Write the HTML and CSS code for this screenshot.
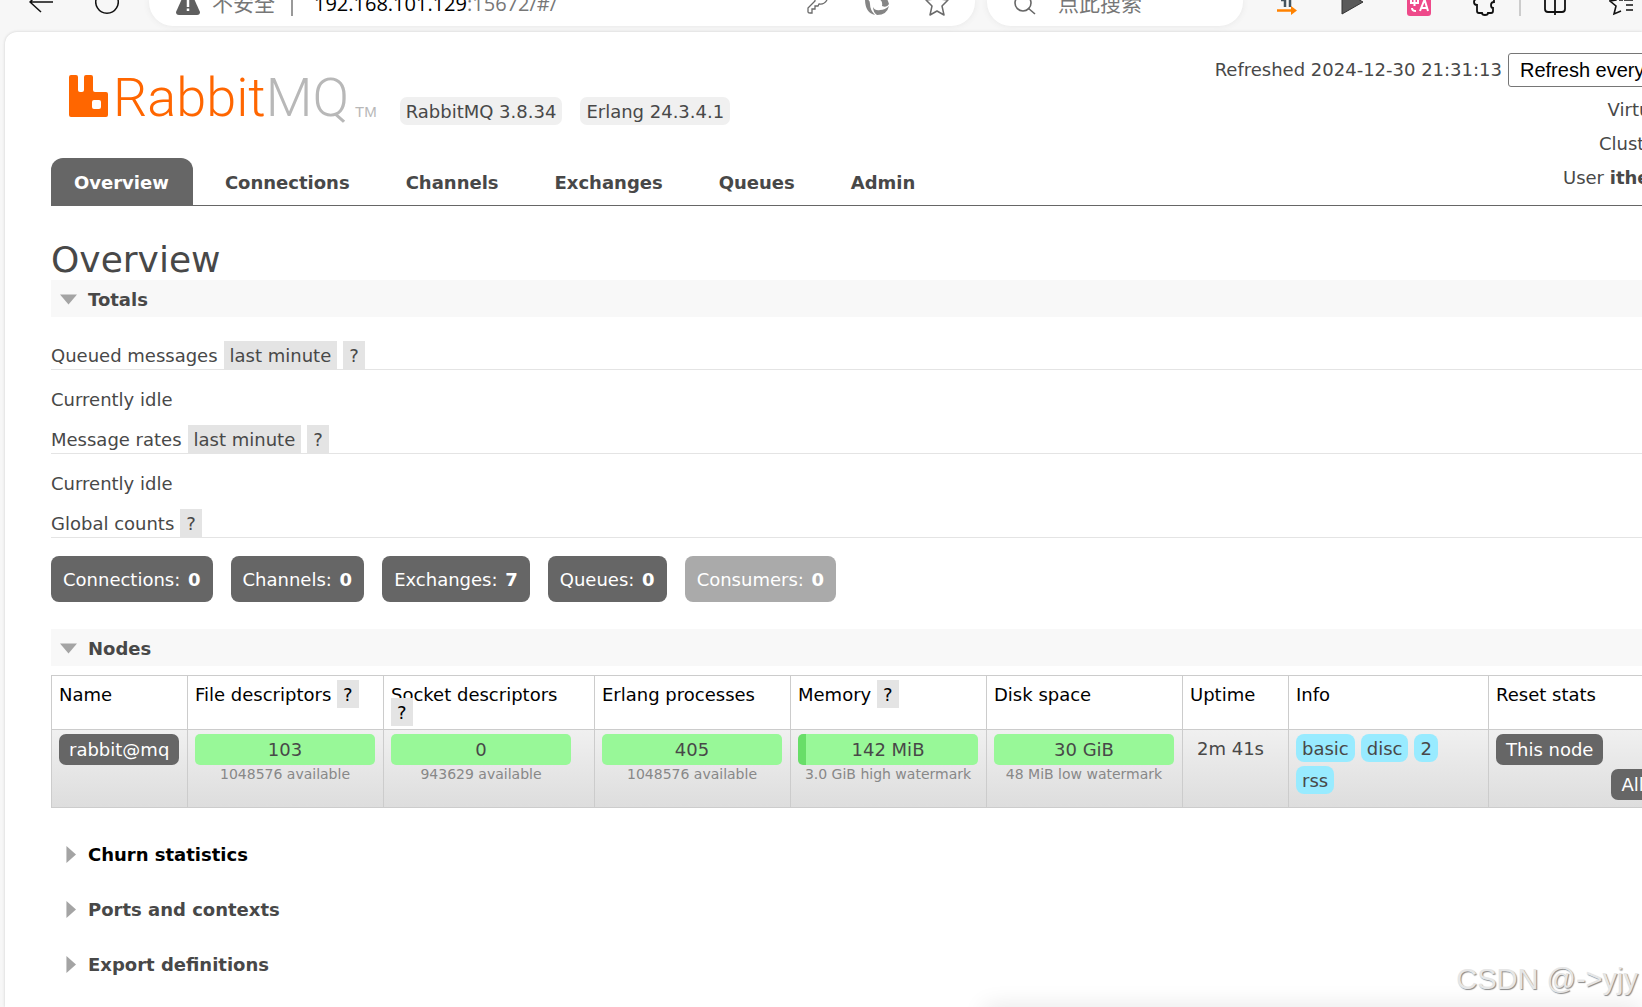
FILE: index.html
```html
<!DOCTYPE html>
<html lang="en">
<head>
<meta charset="utf-8">
<title>RabbitMQ Management</title>
<link rel="stylesheet" href="styles.css">
</head>
<body>
<header class="toolbar">
  <div class="toolbar-nav">
    <button class="icon-button" aria-label="Back"><svg width="24" height="16" viewBox="0 0 24 16"><path d="M24 2H1M12-9L1 2l11 10" fill="none" stroke="#111" stroke-width="1.5"/></svg></button>
    <button class="icon-button" aria-label="Reload"><svg width="24" height="16" viewBox="0 0 24 16"><path d="M2-3a11.200 11.200 0 1 0 20 0" fill="none" stroke="#111" stroke-width="1.500"/></svg></button>
  </div>
  <div class="address">
    <svg width="24" height="16" viewBox="0 0 24 16"><path d="M12-10q2 0 3 2l9 20q0 3-3 3H3q-3 0-3-3L9-8q1-2 3-2z" fill="#5f5f5f"/><path d="M12-4v11M12 8.500v2.500" stroke="#fff" stroke-width="2.500"/></svg>
    <span class="muted">不安全</span>
    <span class="divider dark"></span>
    <span class="url">192.168.101.129<span class="muted">:15672/#/</span></span>
    <span class="address-icons">
      <svg width="24" height="16" viewBox="0 0 24 16"><path d="M9-3l0 4-7 7v4q0 1 2 1h2V9h3V6h3l1-2q5 1 8-4" fill="none" stroke="#6a6a6a" stroke-width="1.300"/></svg>
      <svg width="26" height="16" viewBox="0 0 26 16"><path d="M1-1q5 0 5 5 0 6 5 11Q1 13 1-1z" fill="#858585"/><path d="M9-6Q22-8 25 4q-2 4-7 2 1-5-3-7-4-2-9 1 0-4 3-6z" fill="#858585"/><path d="M25 6q-2 9-12 9-4-3-4-8 2 4 7 3 5 0 9-4z" fill="#858585"/></svg>
      <svg width="26" height="16" viewBox="0 0 26 16"><path d="M13-9l3 8 8 1-6 6 2 9-7-4-7 4 2-9-6-6 8-1z" fill="none" stroke="#6a6a6a" stroke-width="1.500" stroke-linejoin="round"/></svg>
    </span>
  </div>
  <div class="search">
    <svg width="24" height="16" viewBox="0 0 24 16"><circle cx="10" cy="3" r="8" fill="none" stroke="#666" stroke-width="1.600"/><path d="M15 8l7 6" stroke="#666" stroke-width="1.600"/></svg>
    <span class="muted">点此搜索</span>
  </div>
  <div class="extensions">
    <svg width="24" height="16" viewBox="0 0 24 16"><path d="M6 0h4v7M15 0v7" fill="none" stroke="#44535e" stroke-width="2.500"/><path d="M2 10.500h17" stroke="#ff8200" stroke-width="2.500"/><path d="M16 6l6 4.500-6 4.500z" fill="#ff8200"/></svg>
    <svg width="24" height="16" viewBox="0 0 24 16"><path d="M1-10L22 2 1 14z" fill="#5a5a5a" stroke="#333" stroke-width="1"/></svg>
    <svg width="24" height="16" viewBox="0 0 24 16"><rect y="-8" width="24" height="24" rx="3" fill="#ee4a8a"/><path d="M4-2v5h7v-5M7.500-4v10M5 8q0 3 4 3M13 11l4-10h1l3 10M14 8h6" fill="none" stroke="#fff" stroke-width="2"/></svg>
    <svg width="24" height="16" viewBox="0 0 24 16"><path d="M4-4v3Q1-1 1 2t3 3v6q0 2 2 2h3q0 2 3 2t3-2h3q2 0 2-2V8q-2 0-2-3t3-3V-4" fill="none" stroke="#111" stroke-width="1.800"/></svg>
    <span class="divider"></span>
    <svg width="24" height="16" viewBox="0 0 24 16"><path d="M2-6V9q0 3 3 3h14q3 0 3-3V-6M12-8v23" fill="none" stroke="#111" stroke-width="1.800"/></svg>
    <svg width="24" height="16" viewBox="0 0 24 16"><path d="M9-8L7 0 1 1l6 5-2 8 7-3M10 0h4M15 0h9M17 5h7M17 10h7" fill="none" stroke="#111" stroke-width="1.600"/></svg>
  </div>
</header>
<div class="viewport">
<div class="page">
  <div class="masthead">
    <div class="brand">
      <a class="logo" href="#/" aria-label="RabbitMQ">
        <svg width="39" height="42" viewBox="0 0 39 42"><path d="M2 0h5q2 0 2 2v13q0 2 2 2h2q2 0 2-2V2q0-2 2-2h5q2 0 2 2v13q0 2 2 2h11q2 0 2 2v21q0 2-2 2H2q-2 0-2-2V2q0-2 2-2zM25 25q-2 0-2 2v5q0 2 2 2h5q2 0 2-2v-5q0-2-2-2z" fill="#f60" fill-rule="evenodd"/></svg>
        <span class="logo-text">Rabbit<span class="logo-mq">MQ</span></span><span class="logo-tm">TM</span>
      </a>
      <span class="version">RabbitMQ 3.8.34</span>
      <span class="version">Erlang 24.3.4.1</span>
    </div>
    <div class="status">
      <div class="status-row refresh-row"><label for="refresh">Refreshed 2024-12-30 21:31:13</label><select id="refresh" class="select"><option>Refresh every 5 seconds</option></select></div>
      <div class="status-row"><label for="vhost">Virtual host</label><select id="vhost" class="select small-select"><option>All</option></select></div>
      <div class="status-row"><span>Cluster</span><a class="cluster" href="#/cluster-name">rabbit@mq</a></div>
      <div class="status-row"><span>User <b>itheima</b></span><button class="logout">Log out</button></div>
    </div>
  </div>
  <nav class="tabs">
    <a class="tab selected" href="#/">Overview</a>
    <a class="tab" href="#/connections">Connections</a>
    <a class="tab" href="#/channels">Channels</a>
    <a class="tab" href="#/exchanges">Exchanges</a>
    <a class="tab" href="#/queues">Queues</a>
    <a class="tab" href="#/users">Admin</a>
  </nav>
  <main>
    <h1>Overview</h1>
    <section>
      <h2 class="open">Totals</h2>
      <div class="totals">
        <h3>Queued messages <button class="help">last minute</button><button class="help">?</button></h3>
        <p>Currently idle</p>
        <h3>Message rates <button class="help">last minute</button><button class="help">?</button></h3>
        <p>Currently idle</p>
        <h3>Global counts <button class="help">?</button></h3>
        <div class="counts">
          <a class="count" href="#/connections">Connections: <b>0</b></a>
          <a class="count" href="#/channels">Channels: <b>0</b></a>
          <a class="count" href="#/exchanges">Exchanges: <b>7</b></a>
          <a class="count" href="#/queues">Queues: <b>0</b></a>
          <span class="count disabled">Consumers: <b>0</b></span>
        </div>
      </div>
    </section>
    <section>
      <h2 class="open">Nodes</h2>
      <table class="nodes">
        <colgroup><col class="c-name"><col class="c-bar"><col class="c-socket"><col class="c-bar"><col class="c-bar"><col class="c-bar"><col class="c-uptime"><col class="c-info"><col></colgroup>
        <thead><tr>
          <th>Name</th><th>File descriptors <button class="help">?</button></th><th>Socket descriptors <button class="help">?</button></th><th>Erlang processes</th><th>Memory <button class="help">?</button></th><th>Disk space</th><th>Uptime</th><th>Info</th><th>Reset stats</th>
        </tr></thead>
        <tbody><tr>
          <td><a class="button" href="#/nodes/rabbit">rabbit@mq</a></td>
          <td><div class="bar">103</div><div class="limit">1048576 available</div></td>
          <td><div class="bar">0</div><div class="limit">943629 available</div></td>
          <td><div class="bar">405</div><div class="limit">1048576 available</div></td>
          <td><div class="bar" style="--used: 4.6%">142 MiB</div><div class="limit">3.0 GiB high watermark</div></td>
          <td><div class="bar">30 GiB</div><div class="limit">48 MiB low watermark</div></td>
          <td class="uptime">2m 41s</td>
          <td><div class="tags"><span class="tag">basic</span><span class="tag">disc</span><span class="tag">2</span><span class="tag">rss</span></div></td>
          <td><div class="resets"><button class="button">This node</button><button class="button">All nodes</button></div></td>
        </tr></tbody>
      </table>
    </section>
    <section class="closed-list">
      <h2 class="closed hover">Churn statistics</h2>
      <h2 class="closed">Ports and contexts</h2>
      <h2 class="closed">Export definitions</h2>
    </section>
  </main>
</div>
<div class="popup-shadow"></div>
<div class="watermark">CSDN @-&gt;yjy</div>
</div>
</body>
</html>
```
FILE: styles.css
```css
* { box-sizing: border-box; }

body {
  margin: 0;
  height: 100vh;
  display: flex;
  flex-direction: column;
  overflow: hidden;
  background: #f7f7f7;
  color: #484848;
  font: 18px/18px Verdana, "DejaVu Sans", sans-serif;
}

button { font: inherit; color: inherit; border: 0; }
a { color: inherit; text-decoration: none; }
svg { display: block; flex: none; }

/* Browser toolbar */
.toolbar {
  flex: none;
  height: 32px;
  display: flex;
  align-items: flex-start;
  padding: 0 9px 0 29px;
  font: 21px/8px "Liberation Sans", "Noto Sans CJK SC", sans-serif;
  white-space: nowrap;
}
.toolbar-nav { display: flex; gap: 42px; margin-right: 30px; }
.icon-button { background: none; padding: 0; }
.address, .search {
  display: flex;
  height: 26px;
  background: #fff;
  border-radius: 0 0 24px 24px;
  box-shadow: 0 0 6px #e6e6e6;
  clip-path: inset(0 -8px -8px -8px);
}
.address { flex: 1; padding: 0 25px 0 27px; }
.address > .muted { margin-left: 12px; }
.address-icons { display: flex; gap: 34px; margin-left: auto; }
.search { width: 256px; margin-left: 12px; padding-left: 26px; gap: 21px; }
.muted { color: #777; }
.divider { width: 2px; height: 16px; background: #ccc; }
.dark { background: #999; margin: 0 21px 0 16px; }
.url { font-family: "Open Sans", sans-serif; font-size: 20px; color: #000; }
.extensions { display: flex; gap: 42px; margin-left: 32px; }
.extensions .divider { margin: 0 -20px; }

/* Page */
.viewport {
  flex: 1;
  min-height: 0;
  margin-left: 5px;
  position: relative;
  overflow: hidden;
  background: #fff;
  border-radius: 12px 0 0 0;
  box-shadow: 0 0 3px #ccc;
}
.page { margin: 0 -140px 0 46px; }
.masthead { display: flex; justify-content: space-between; height: 126px; padding-right: 24px; }
.brand { display: flex; align-items: flex-end; gap: 18px; padding: 0 0 33px 18px; }
.logo { display: flex; align-items: flex-end; gap: 6px; padding: 0 5px 8px 0; }
.logo-text { font: 54px/38px Roboto, "Liberation Sans", sans-serif; font-weight: 300; color: #f60; margin-left: -1px; }
.logo-mq { color: #b8b8b8; }
.logo-tm { font: 15px/11px "Liberation Sans", sans-serif; color: #b8b8b8; }
.version { padding: 6px 6px 4px; border-radius: 7px; background: #f0f0f0; }
.status { padding-top: 21px; white-space: nowrap; }
.status-row { display: flex; justify-content: flex-end; align-items: center; gap: 6px; height: 34px; }
.refresh-row { margin-bottom: 6px; }
.select {
  width: 250px;
  height: 34px;
  padding: 0 7px;
  border: 1px solid #767676;
  border-radius: 3px;
  background: #fff;
  color: #000;
  font: 20px "Liberation Sans", sans-serif;
}
.small-select { width: 41px; height: 28px; padding: 0; }
.cluster { font-size: 16px; }
.logout { padding: 4px 6px; font: 16px "Liberation Sans", sans-serif; }

.tabs { display: flex; gap: 8px; border-bottom: 1px solid #666; }
.tab { padding: 16px 24px 13px; font-weight: bold; border-radius: 12px 12px 0 0; }
.tab.selected { background: #666; color: #fff; padding-left: 23px; }

h1 { margin: 35px 0 0; padding-bottom: 1px; font-size: 36px; line-height: 38px; font-weight: normal; }
h2 {
  display: flex;
  align-items: center;
  gap: 11px;
  margin: 0;
  height: 37px;
  padding: 2px 0 0 9px;
  font-size: 18px;
}
h2::before { content: ""; width: 17px; height: 17px; background: #a4a4a4; }
.open { background: #f8f8f8; }
.open::before { clip-path: polygon(0 20%, 100% 20%, 50% 80%); }
.closed::before { clip-path: polygon(38% 0, 94% 50%, 38% 100%); }
.hover { color: #000; }

.totals { padding: 24px 0 27px; }
h3 {
  display: flex;
  align-items: baseline;
  gap: 6px;
  margin: 0;
  border-bottom: 1px solid #e4e4e4;
  font-size: 18px;
  font-weight: normal;
}
.help { padding: 6px 6px 4px; background: #e4e4e4; }
p { margin: 21px 0 16px; }
.counts { display: flex; gap: 18px; margin-top: 18px; }
.count { padding: 15px 12px 13px; border-radius: 8px; background: #666; color: #fff; }
.count b { margin-left: 2px; }
.disabled { background: #aaa; }

/* Nodes table */
.nodes { width: 100%; margin-top: 9px; border-collapse: collapse; table-layout: fixed; }
.c-name { width: 136px; }
.c-bar { width: 196px; }
.c-socket { width: 211px; }
.c-uptime { width: 106px; }
.c-info { width: 200px; }
th, td { border: 1px solid #ccc; vertical-align: top; }
th { padding: 10px 12px 7px 7px; color: #000; font-weight: normal; text-align: left; }
th .help { margin: -6px 0 -4px; }
td { height: 78px; padding: 4px 7px; }
tbody tr { background: linear-gradient(#f0f0f0, #dddddd); }
.button { display: inline-block; padding: 7px 10px 6px; border-radius: 7px; background: #666; color: #fff; }
.bar {
  width: 180px;
  padding: 7px 0 6px;
  border-radius: 5px;
  background: linear-gradient(to right, #68de68 var(--used, 0%), #98f898 var(--used, 0%));
  text-align: center;
}
.limit { width: 180px; font-size: 14px; text-align: center; color: #888; white-space: nowrap; }
.uptime { padding: 10px 0 0 14px; }
.tags { display: flex; flex-wrap: wrap; gap: 4px 6px; padding-right: 30px; }
.tag { padding: 6px 6px 4px; border-radius: 8px; background: #98ebff; }
.resets { display: flex; align-items: flex-start; gap: 8px; height: 66px; }
.resets .button + .button { align-self: flex-end; }

.closed-list { display: flex; flex-direction: column; gap: 18px; margin-top: 27px; }

/* Overlays */
.popup-shadow {
  position: absolute;
  left: 980px;
  right: 0;
  top: 100%;
  height: 20px;
  box-shadow: 0 0 24px rgba(0, 0, 0, .11);
}
.watermark {
  position: absolute;
  right: 4px;
  bottom: 12px;
  font: 29px/32px "Liberation Sans", sans-serif;
  color: #e6e6e6;
  text-shadow: 1px 1px 1px #888;
}
```
